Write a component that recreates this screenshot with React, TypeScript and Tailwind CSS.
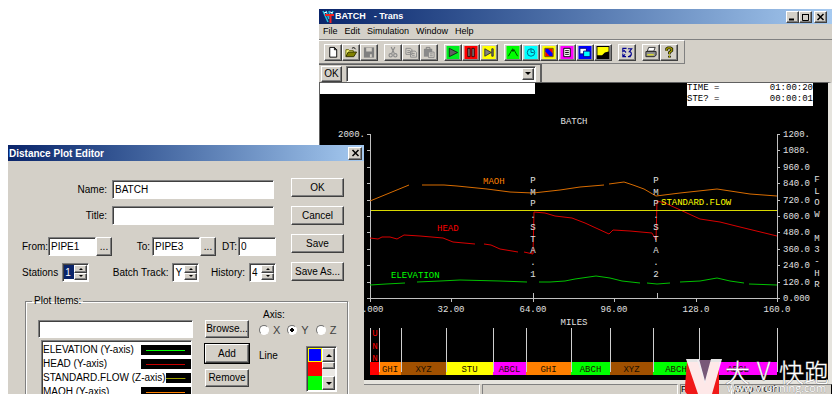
import type { ReactNode } from "react";

const raised =
  "border border-t-white border-l-white border-r-[#404040] border-b-[#404040] shadow-[inset_-1px_-1px_0_#808080] bg-[#d4d0c8]";
const sunken =
  "border border-t-[#808080] border-l-[#808080] border-r-white border-b-white shadow-[inset_1px_1px_0_#404040] bg-white";
const titleBar =
  "flex items-center bg-linear-to-r from-[#0a246a] to-[#a6caf0] text-[10px] font-bold text-white";

function CaptionButton({ label, children }: { label: string; children: ReactNode }) {
  return (
    <button type="button" aria-label={label} className={`flex h-3 w-[13px] items-center justify-center ${raised}`}>
      <svg viewBox="0 0 9 8" className="h-2 w-[9px]" fill="none" stroke="#000">
        {children}
      </svg>
    </button>
  );
}

const cross = <path d="M1.5 1l6 6M7.5 1l-6 6" strokeWidth="1.5" />;

const toolGroups: { name: string; art: ReactNode }[][] = [
  [
    { name: "New", art: <path d="M3.500 1.500h5l2.500 2.500v8H3.500zM8.500 1.500v2.500H11" fill="#fff" stroke="#000" /> },
    {
      name: "Open",
      art: (
        <>
          <path d="M1.500 11V4h3l1 1h4v2" fill="#ffff80" stroke="#606000" />
          <path d="M1.500 11.500l2.500-5h9l-3 5z" fill="#808000" stroke="#303000" />
          <path d="M8 2.500c2-1.500 3-.5 4 1" fill="none" stroke="#000" />
        </>
      ),
    },
    { name: "Save", art: <><path d="M1.500 1.500h11v11h-11z" fill="#808080" /><path d="M4 2h6v4H4zM8 9h2v3H8z" fill="#d4d0c8" /></> },
  ],
  [
    {
      name: "Cut",
      art: (
        <g fill="none" stroke="#8a8a8a" strokeWidth="1.2">
          <path d="M5 1l3.500 7M9 1L5.500 8" /><circle cx="4.500" cy="10" r="1.800" /><circle cx="9.500" cy="10" r="1.800" />
        </g>
      ),
    },
    {
      name: "Copy",
      art: (
        <g fill="#d4d0c8" stroke="#8a8a8a">
          <path d="M1.500 2.500h5l1.500 1.500v5H1.500zM6.500 5.500h5l1.500 1.500v5H6.500z" /><path d="M3 5h3M3 7h3M8 8h3M8 10h3" />
        </g>
      ),
    },
    {
      name: "Paste",
      art: (
        <>
          <path d="M1.500 3h9v8.500h-9z" fill="#8a8a8a" /><path d="M4 1.500h4v2H4z" fill="#d4d0c8" stroke="#808080" />
          <path d="M6.500 6.500h6v6h-6z" fill="#d4d0c8" stroke="#8a8a8a" /><path d="M8 8.500h3M8 10.500h3" stroke="#8a8a8a" />
        </>
      ),
    },
  ],
  [
    { name: "Run", art: <><path d="M0 0h14v14H0z" fill="#00f020" /><path d="M3 2.500v9l9-4.500z" fill="#606060" stroke="#103010" /></> },
    { name: "Pause", art: <><path d="M0 0h14v14H0z" fill="#f00" /><path d="M3.500 2.500h2.500v9H3.500zM8 2.500h2.500v9H8z" fill="#808080" stroke="#300" /></> },
    { name: "Step", art: <><path d="M0 0h14v14H0z" fill="#ff0" /><path d="M2.500 3v8l7-4zM10 3h1.500v8H10z" fill="#808080" stroke="#333" /></> },
  ],
  [
    { name: "Profile plot", art: <><path d="M0 0h14v14H0z" fill="#0f0" /><path d="M2 11l4-7 1 2 1-2 4 7M6 4l1-1 1 1" fill="none" stroke="#004000" /></> },
    { name: "Time plot", art: <><path d="M0 0h14v14H0z" fill="#0ff" /><circle cx="7" cy="7" r="4" fill="none" stroke="#006080" /><path d="M7 3v4h3" fill="none" stroke="#006080" /></> },
    { name: "Map", art: <><path d="M0 0h14v14H0z" fill="#ff0" /><path d="M3 3h8v8H3z" fill="#f00" /><path d="M3 3h3l5 5v3H8L3 6z" fill="#00f" /><path d="M2.500 2.500h9v9h-9z" fill="none" stroke="#640" /></> },
    { name: "Report", art: <><path d="M0 0h14v14H0z" fill="#f0f" /><path d="M3.500 2.500h7v9h-7z" fill="#fff" stroke="#000" /><path d="M5 5h4M5 7h4M5 9h4" stroke="#000" /></> },
    { name: "Windows", art: <><path d="M0 0h14v14H0z" fill="#00f" /><path d="M1.500 2.500h7v6h-7z" fill="#fff" stroke="#000080" /><path d="M5.500 5.500h7v6h-7z" fill="#0ff" stroke="#000080" /></> },
    { name: "Trend", art: <><path d="M0 0h14v14H0z" fill="#000" /><path d="M1 1h12v5l-4 1-3 3H1z" fill="#ff0" /></> },
  ],
  [
    {
      name: "Refresh",
      art: (
        <g fill="none" stroke="#000090" strokeWidth="1.200">
          <path d="M6.500 2.500H2.500V6l2-1.500M4 5l2 2M8 3h4L9.500 6c3 0 3 5-.5 5M11 11.500H8M2.500 8v3.500H6M2.500 11.500L5 9" />
        </g>
      ),
    },
  ],
  [
    { name: "Print", art: <><path d="M4.500 1.500h7l-1.500 4H3z" fill="#fff" stroke="#333" /><path d="M1.500 6h11v4l-2 1.500h-9z" fill="#909090" stroke="#222" /><path d="M3 9.500h7" stroke="#ff0" /></> },
    {
      name: "Help",
      art: (
        <g fill="none">
          <path d="M4.500 5V3L6 2h2.500L10 3v2L7.500 7v2M7.500 10.500v2" stroke="#202000" strokeWidth="3" />
          <path d="M4.500 5V3L6 2h2.500L10 3v2L7.500 7v2M7.500 10.500v2" stroke="#b0a800" strokeWidth="1.200" />
        </g>
      ),
    },
  ],
];

const yTicks = ["1200.", "1080.", "960.0", "840.0", "720.0", "600.0", "480.0", "360.0", "240.0", "120.0", "0.000"].map(
  (label, i) => ({ label, y: Math.round(134 + i * 16.4) }),
);
const xTicks = ["0.000", "32.00", "64.00", "96.00", "128.0", "160.0"].map((label, i) => ({
  label,
  x: Math.round(370 + i * 81.4),
}));
const batches = [
  { x: 370, end: 379, color: "#ff0000", label: "" },
  { x: 379, end: 401, color: "#ff8000", label: "GHI" },
  { x: 401, end: 446, color: "#a05000", label: "XYZ" },
  { x: 446, end: 493, color: "#ffff00", label: "STU" },
  { x: 493, end: 526, color: "#ff00ff", label: "ABCL" },
  { x: 526, end: 571, color: "#ff8000", label: "GHI" },
  { x: 571, end: 610, color: "#00ff00", label: "ABCH" },
  { x: 610, end: 653, color: "#a05000", label: "XYZ" },
  { x: 653, end: 699, color: "#00ff00", label: "ABCH" },
  { x: 699, end: 777, color: "#ff00ff", label: "ABCL" },
];
const maoh = ["370,201 409,185", "422,185 444,185 457,186 487,189 510,192 533,193 560,190 580,187 604,185", "609,184 624,182 633,185 644,189 656,196 680,193 717,189 750,194 777,196"];
const head = [
  "370,238 378,239 382,237 390,237 397,239 404,235 420,236 443,238 453,242 475,244",
  "484,244 491,245 500,249 518,252",
  "524,252 533,254 534,212 545,213 555,216 572,218 585,223 609,234 613,230 630,231 652,233 656,240 657,201 665,203 700,219 720,222 740,227 777,236",
];
const elevation = [
  "370,285 386,284 405,283",
  "417,282 440,281 460,280 500,281 527,282",
  "539,282 550,282 565,281 575,279 596,276 610,278 622,281 640,283",
  "647,283 657,284 670,283",
  "680,282 700,281 717,278 730,281 744,283",
  "749,284 777,285",
];

function Trace({ runs, color }: { runs: string[]; color: string }) {
  return (
    <g fill="none" stroke={color}>
      {runs.map((points) => (
        <polyline key={points} points={points} />
      ))}
    </g>
  );
}

function VerticalText({ text, x, top }: { text: string; x: number; top: number }) {
  return (
    <g textAnchor="middle">
      {[...text].map((c, i) => (
        <text key={i} x={x} y={Math.round(top + i * 11.7)}>
          {c}
        </text>
      ))}
    </g>
  );
}

function Chart() {
  return (
    <svg
      viewBox="320 106 508 274"
      className="block h-auto w-full bg-black font-['Liberation_Mono',monospace] text-[9px]"
      fill="#e0e0e0"
    >
      <text x="574" y="124" textAnchor="middle">BATCH</text>
      <text x="365" y="137" textAnchor="end">2000.</text>
      <g fill="none" stroke="#c0c0c0" shapeRendering="crispEdges">
        <path d="M370.5 134V298M777.5 134V298M370 298.500H778" />
        {yTicks.map(({ y }) => (
          <path key={y} d={`M367 ${y + 0.5}h3M777 ${y + 0.5}h3`} />
        ))}
        {xTicks.map(({ x }) => (
          <path key={x} d={`M${x + 0.5} 298v4`} />
        ))}
        <path d="M533.500 293v5M657.500 293v5" />
      </g>
      {yTicks.map(({ label, y }) => (
        <text key={label} x="783" y={y + 3}>{label}</text>
      ))}
      {xTicks.map(({ label, x }) => (
        <text key={label} x={x} y="312" textAnchor="middle">{label}</text>
      ))}
      <text x="574" y="325" textAnchor="middle">MILES</text>
      <Trace runs={maoh} color="#d86c00" />
      <Trace runs={head} color="#d80000" />
      <Trace runs={elevation} color="#00c000" />
      <rect x="371" y="210" width="406" height="1" fill="#d8d800" />
      <text x="483" y="184" fill="#ff8000">MAOH</text>
      <text x="437" y="231" fill="#ff0000">HEAD</text>
      <text x="391" y="278" fill="#00ff00">ELEVATION</text>
      <text x="661" y="205" fill="#ffff00">STANDARD.FLOW</text>
      <VerticalText text="PMP.STA.1" x={533} top={183} />
      <VerticalText text="PMP.STA.2" x={656} top={183} />
      <VerticalText text="FLOW M3-HR" x={817} top={182} />
      {batches.map((b) => (
        <g key={b.x}>
          <rect x={b.x} y="362" width={b.end - b.x} height="13" fill={b.color} />
          <path d={`M${b.x + 0.5} 328V${b.label ? 372 : 362}`} stroke="#d0d0d0" />
          <text x={(b.x + b.end) / 2} y="372" textAnchor="middle" fill="#201000">{b.label}</text>
        </g>
      ))}
      <path d="M777.500 328v44" stroke="#d0d0d0" />
      <g fill="#ff0000" textAnchor="middle">
        <text x="375" y="336">U</text>
        <text x="375" y="349">N</text>
        <text x="375" y="361">N</text>
      </g>
    </svg>
  );
}

function TransWindow() {
  return (
    <section className="absolute top-[9px] right-1.5 left-[319px] bg-[#d4d0c8]">
      <header className={`${titleBar} h-[15px] pr-[5px] pl-[3px]`}>
        <svg viewBox="0 0 13 13" className="h-[13px] w-[13px]" fill="none">
          <path d="M1 1l5 11M4 1l3 8M7 1l1 5M11 1L8 7" stroke="#20c0e0" strokeWidth="1.500" />
          <path d="M3 5h9M8.500 5v8" stroke="#f02020" strokeWidth="2" />
          <path d="M2 3l3-1M8 2l3 1" stroke="#fff" />
        </svg>
        <h1 className="flex gap-2 text-[9px]">
          <span>BATCH</span>
          <span>- Trans</span>
        </h1>
        <div className="ml-auto flex">
          <CaptionButton label="Minimize"><path d="M1 6.500h5" strokeWidth="2" /></CaptionButton>
          <CaptionButton label="Maximize"><path d="M1 1.500h7M1.500 1v6.500h6V1" /></CaptionButton>
          <div className="ml-0.5 flex"><CaptionButton label="Close">{cross}</CaptionButton></div>
        </div>
      </header>
      <nav className="flex h-4 items-center gap-[7px] border-b border-[#808080] pl-1 text-[9px]">
        {["File", "Edit", "Simulation", "Window", "Help"].map((m) => (
          <button key={m} type="button">{m}</button>
        ))}
      </nav>
      <div className="flex h-6 w-fit items-center gap-1.5 border-t border-r border-b border-t-white border-r-[#808080] border-b-[#808080] pr-1.5 pl-[5px]">
        {toolGroups.map((group) => (
          <div key={group[0].name} className="flex">
            {group.map((t) => (
              <button key={t.name} type="button" aria-label={t.name} className={`flex h-[17px] w-[18px] items-center justify-center ${raised}`}>
                <svg viewBox="0 0 14 14" className="h-[13px] w-[14px]">{t.art}</svg>
              </button>
            ))}
          </div>
        ))}
      </div>
      <div className="flex h-[18px] w-[223px] items-center gap-1 border-t border-r-2 border-[#606060] pl-0.5">
        <button type="button" className={`h-4 w-[21px] text-[10px] leading-none ${raised}`}>OK</button>
        <div className={`flex h-4 grow items-center p-px ${sunken}`}>
          <select aria-label="Command" className="h-full min-w-0 grow appearance-none bg-white text-[10px]">
            <option></option>
          </select>
          <span className={`pointer-events-none flex h-full w-3 items-center justify-center ${raised}`}>
            <svg viewBox="0 0 6 3" className="h-[3px] w-1.5"><path d="M0 0h6L3 3z" /></svg>
          </span>
        </div>
        <span className="w-0" />
      </div>
      <main className="border-t border-r-4 border-b-4 border-l border-t-[#606060] border-r-[#e6e4de] border-b-[#e6e4de] border-l-[#606060] bg-black">
        <div className="flex items-start justify-between pr-[15px] font-['Liberation_Mono',monospace] text-[9px]">
          <div className="h-[11px] w-[215px] bg-white" />
          <dl className="grid w-[126px] grid-cols-2 bg-white pb-px leading-[11px] text-black">
            <dt>TIME =</dt>
            <dd className="text-right">01:00:20</dd>
            <dt>STE? =</dt>
            <dd className="text-right">00:00:01</dd>
          </dl>
        </div>
        <Chart />
      </main>
      <footer className="flex h-3 items-center gap-0.5 text-[9px] leading-none">
        <span className="h-full w-[161px] border border-t-[#808080] border-r-white" />
        <span className="h-full grow border border-t-[#808080] border-r-white border-l-[#808080]" />
        <span className="h-full w-[52px] border border-t-[#808080] border-r-white border-l-[#808080]">Paused</span>
        <span className="h-full w-[98px] border border-t-[#808080] border-l-[#808080]">Step 0.03hr</span>
      </footer>
    </section>
  );
}

function PushButton({ children, className = "h-[19px] w-[53px]" }: { children: ReactNode; className?: string }) {
  return (
    <button type="button" className={`shrink-0 leading-none ${raised} ${className}`}>
      {children}
    </button>
  );
}

function Field({ id, value, className }: { id: string; value: string; className: string }) {
  return <input id={id} defaultValue={value} className={`h-[19px] min-w-0 px-0.5 outline-none ${sunken} ${className}`} />;
}

function Spinner({ id, value, selected = false }: { id: string; value: string; selected?: boolean }) {
  return (
    <div className={`flex h-[19px] w-[27px] shrink-0 p-px ${sunken}`}>
      <input
        id={id}
        defaultValue={value}
        className={`h-3.5 w-2.5 pl-px outline-none ${selected ? "bg-[#0a246a] text-white" : "bg-white"}`}
      />
      <div className="flex grow flex-col">
        {["M0 3h4L2 1z", "M0 1h4L2 3z"].map((d, i) => (
          <button key={d} type="button" aria-label={i ? "Decrease" : "Increase"} className={`flex grow items-center justify-center ${raised}`}>
            <svg viewBox="0 0 4 4" className="h-1 w-1"><path d={d} /></svg>
          </button>
        ))}
      </div>
    </div>
  );
}

const plotItems = [
  { name: "ELEVATION (Y-axis)", color: "#00ff00", wide: false },
  { name: "HEAD (Y-axis)", color: "#c80000", wide: false },
  { name: "STANDARD.FLOW (Z-axis)", color: "#a0a000", wide: true },
  { name: "MAOH (Y-axis)", color: "#ff8000", wide: false },
];

function PlotEditor() {
  return (
    <section className="absolute top-[145px] left-2 w-[356px] bg-[#d4d0c8] pb-5 text-[10px]">
      <header className={`${titleBar} h-4 pr-0.5 pl-px`}>
        <h2 className="grow">Distance Plot Editor</h2>
        <button type="button" aria-label="Close" className={`flex h-[13px] w-3.5 items-center justify-center ${raised}`}>
          <svg viewBox="0 0 9 8" className="h-2 w-[9px]" fill="none" stroke="#000">{cross}</svg>
        </button>
      </header>
      <form className="pr-4 pl-3.5">
        <div className="flex justify-between pt-[17px] pr-1">
          <div className="flex w-[254px] flex-col pt-0.5">
            <div className="flex items-center justify-end gap-[5px] pr-0.5">
              <label htmlFor="name">Name:</label>
              <Field id="name" value="BATCH" className="w-[162px]" />
            </div>
            <div className="mt-[7px] flex items-center justify-end gap-[5px] pr-0.5">
              <label htmlFor="title">Title:</label>
              <Field id="title" value="" className="w-[162px]" />
            </div>
            <div className="mt-3 flex items-center">
              <label htmlFor="from" className="w-[26px]">From:</label>
              <Field id="from" value="PIPE1" className="w-12" />
              <PushButton className="h-[19px] w-4">...</PushButton>
              <label htmlFor="to" className="ml-auto pr-0.5">To:</label>
              <Field id="to" value="PIPE3" className="w-12" />
              <PushButton className="h-[19px] w-4">...</PushButton>
              <label htmlFor="dt" className="pr-px pl-1.5">DT:</label>
              <Field id="dt" value="0" className="w-[38px]" />
            </div>
            <div className="mt-[7px] flex items-center justify-between">
              <div className="flex items-center gap-1">
                <label htmlFor="stations">Stations</label>
                <Spinner id="stations" value="1" selected />
              </div>
              <div className="flex items-center gap-1 pl-3">
                <label htmlFor="track">Batch Track:</label>
                <Spinner id="track" value="Y" />
              </div>
              <div className="flex items-center gap-1">
                <label htmlFor="history">History:</label>
                <Spinner id="history" value="4" />
              </div>
            </div>
          </div>
          <div className="flex flex-col gap-[9px]">
            {["OK", "Cancel", "Save", "Save As..."].map((b) => (
              <PushButton key={b}>{b}</PushButton>
            ))}
          </div>
        </div>
        <fieldset className="mt-3 ml-[3px] border border-[#808080] px-2 shadow-[inset_1px_1px_0_#fff,1px_1px_0_#fff]">
          <legend className="-ml-0.5 px-0.5 leading-[14px]">Plot Items:</legend>
          <div className="flex pt-3 pl-1">
            <div className="w-[155px]">
              <input aria-label="Plot item" className={`h-[18px] w-full px-0.5 outline-none ${sunken}`} />
              <ul className={`mt-0.5 ml-[3px] w-[151px] pt-0.5 pl-px ${sunken}`}>
                {plotItems.map((item) => (
                  <li key={item.name} className="flex h-3.5 items-center justify-between leading-none whitespace-nowrap">
                    {item.name}
                    <svg
                      viewBox="0 0 50 10"
                      preserveAspectRatio="xMaxYMid slice"
                      className={item.wide ? "h-2.5 w-[30px]" : "h-2.5 w-[50px]"}
                    >
                      <path d="M0 0h50v10H0z" />
                      <path d="M5 5.500h39" stroke={item.color} />
                    </svg>
                  </li>
                ))}
              </ul>
            </div>
            <div className="ml-3 flex flex-col gap-1.5">
              <PushButton className="h-[18px] w-11">Browse...</PushButton>
              <PushButton className="h-[19px] w-11 outline outline-black">Add</PushButton>
              <PushButton className="h-[18px] w-11">Remove</PushButton>
            </div>
            <div className="-mt-3 grow pl-2.5">
              <div role="radiogroup" aria-labelledby="axis">
                <p id="axis" className="pl-1 leading-[14px]">Axis:</p>
                <div className="flex gap-[7px] text-[11px] leading-4 text-[#404040]">
                  {["X", "Y", "Z"].map((a) => (
                    <label key={a} className="flex items-center gap-1">
                      <input
                        type="radio"
                        name="axis"
                        defaultChecked={a === "Y"}
                        className="h-2.5 w-2.5 appearance-none rounded-full border border-t-[#707070] border-r-white border-b-white border-l-[#707070] bg-white checked:bg-[radial-gradient(#000_2px,#fff_2px)]"
                      />
                      {a}
                    </label>
                  ))}
                </div>
              </div>
              <div className="mt-2 flex justify-between pr-0.5">
                <span className="pt-0.5">Line</span>
                <div className={`flex h-[46px] w-[31px] p-px ${sunken}`}>
                  <div className="flex w-3.5 flex-col">
                    <button type="button" aria-label="Blue" className="h-3.5 w-3.5 border border-[#ffff00] bg-[#0000ff]" />
                    <button type="button" aria-label="Red" className="h-3.5 w-3.5 bg-[#ff0000]" />
                    <button type="button" aria-label="Green" className="h-3.5 w-3.5 bg-[#00ff00]" />
                  </div>
                  <div className="flex grow flex-col bg-[#eae8e4]">
                    <button type="button" aria-label="Scroll up" className={`flex h-3.5 items-center justify-center ${raised}`}>
                      <svg viewBox="0 0 6 3" className="h-[3px] w-1.5"><path d="M0 3h6L3 0z" /></svg>
                    </button>
                    <span className={`h-[7px] ${raised}`} />
                    <button type="button" aria-label="Scroll down" className={`mt-auto flex h-3.5 items-center justify-center ${raised}`}>
                      <svg viewBox="0 0 6 3" className="h-[3px] w-1.5"><path d="M0 0h6L3 3z" /></svg>
                    </button>
                  </div>
                </div>
              </div>
            </div>
          </div>
        </fieldset>
      </form>
    </section>
  );
}

function Watermark() {
  return (
    <svg viewBox="685 355 150 43" className="absolute top-[355px] right-[3px] h-[43px] w-[150px]">
      <path d="M687 362h32v32h-32q-4-4-2-8z" fill="#f01818" />
      <path d="M697 360h14l-6 24z" fill="#785878" />
      <path d="M686 359h13l6 22 6-22h11l-10 35h-14z" fill="#fff" fillOpacity=".9" />
      <g
        fill="#fff"
        stroke="#808080"
        strokeWidth=".8"
        paintOrder="stroke"
        className="font-['Noto_Sans_CJK_SC',sans-serif] text-[25px] font-light"
      >
        <text x="725" y="382">大</text>
        <text x="757" y="380" className="text-[24px]">V</text>
        <text x="779" y="382">快跑</text>
      </g>
      <text x="727" y="392" fill="#fff" stroke="#909090" strokeWidth=".6" paintOrder="stroke" className="font-['Open_Sans',sans-serif] text-[11px]">
        www.vrunning.com
      </text>
    </svg>
  );
}

export default function App() {
  return (
    <div className="min-h-screen bg-white font-['Liberation_Sans',Arial,sans-serif] text-black">
      <div className="relative h-[394px] overflow-hidden">
        <TransWindow />
        <PlotEditor />
        <Watermark />
      </div>
    </div>
  );
}
